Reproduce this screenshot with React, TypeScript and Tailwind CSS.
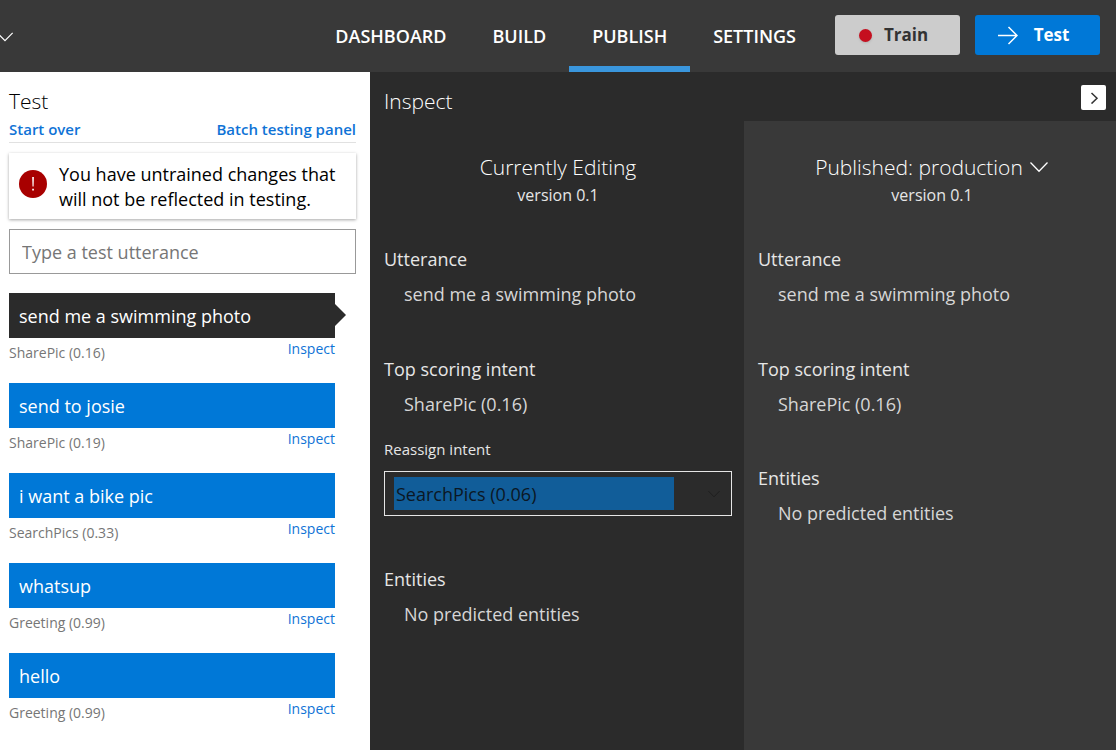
import React from "react";

type Utterance = { text: string; intent: string; score: string };

const utterances: Utterance[] = [
  { text: "send me a swimming photo", intent: "SharePic", score: "0.16" },
  { text: "send to josie", intent: "SharePic", score: "0.19" },
  { text: "i want a bike pic", intent: "SearchPics", score: "0.33" },
  { text: "whatsup", intent: "Greeting", score: "0.99" },
  { text: "hello", intent: "Greeting", score: "0.99" },
];

const tabs = ["DASHBOARD", "BUILD", "PUBLISH", "SETTINGS"];

function Chevron({ className }: { className: string }) {
  return (
    <svg className={className} viewBox="0 0 20 12" fill="none" stroke="currentColor" strokeWidth="1.3" aria-hidden="true">
      <path d="M1.5 1.5 10 10.2 18.5 1.5" />
    </svg>
  );
}

function Header() {
  return (
    <header className="flex h-[72px] shrink-0 items-center bg-[#393939] pr-4 text-white">
      <button type="button" aria-label="Select app" className="-ml-1 mt-0.5">
        <Chevron className="h-3 w-[18px]" />
      </button>
      <nav className="ml-auto mr-4 flex h-full">
        {tabs.map((tab) => (
          <a
            key={tab}
            href={`#${tab.toLowerCase()}`}
            className={
              tab === "PUBLISH"
                ? "flex items-center border-y-[6px] border-t-transparent border-b-[#3a96dd] px-[23px] text-lg font-semibold"
                : "flex items-center border-y-[6px] border-transparent px-[23px] text-lg font-semibold"
            }
          >
            {tab}
          </a>
        ))}
      </nav>
      <div className="flex gap-[15px] pb-0.5">
        <button type="button" className="flex h-10 w-[125px] items-center justify-center gap-3 rounded-[3px] bg-[#cccccc] pr-2 text-[17px] font-bold text-[#333333]">
          <span className="size-[13px] rounded-full bg-[#c50f1f] shadow-sm" />
          Train
        </button>
        <button type="button" className="flex h-10 w-[125px] items-center justify-center gap-4 rounded-[3px] bg-[#0078d7] pr-2 text-[17px] font-bold">
          <svg className="h-5 w-5" viewBox="0 0 20 20" fill="none" stroke="currentColor" strokeWidth="1.5" aria-hidden="true">
            <path d="M0 10.500H19M10.500 2 19 10.500l-8.500 8.500" />
          </svg>
          Test
        </button>
      </div>
    </header>
  );
}

function TestPanel() {
  return (
    <aside className="w-[370px] shrink-0 bg-white pr-[14px] pl-[9px] text-black">
      <h2 className="pt-[15px] text-[21px] leading-7 font-light">Test</h2>
      <div className="flex justify-between border-b border-[#e1e1e1] pt-1 pb-[3px] text-[15px] leading-5 font-semibold text-[#0f73d6]">
        <a href="#start-over">Start over</a>
        <a href="#batch">Batch testing panel</a>
      </div>
      <div role="alert" className="mt-2.5 flex h-[66px] items-center gap-3 bg-white pl-2.5 shadow-[0_1px_3px_rgba(0,0,0,0.35)]">
        <svg className="mb-1 size-7 shrink-0" viewBox="0 0 28 28" aria-hidden="true">
          <circle cx="14" cy="14" r="14" fill="#a80000" />
          <path d="M13.2 7h1.700l-.3 9.500h-1.100zM13.200 18.700H14.900v1.900h-1.700z" fill="#fff" />
        </svg>
        <p className="pt-0.5 text-lg leading-[25px]">
          You have untrained changes that
          <br />
          will not be reflected in testing.
        </p>
      </div>
      <input
        type="text"
        aria-label="Test utterance"
        placeholder="Type a test utterance"
        className="mt-2.5 h-[45px] w-full border border-[#999999] bg-white px-3 text-lg placeholder:text-[#767676]"
      />
      <ul className="mt-[19px] mr-[21px]">
        {utterances.map((item, index) => (
          <li key={item.text} className="h-[90px]">
            <div
              className={
                index === 0
                  ? "relative flex h-[45px] items-center bg-[#2b2b2b] px-2.5 text-lg text-white"
                  : "flex h-[45px] items-center bg-[#0078d7] px-2.5 text-lg text-white"
              }
            >
              {item.text}
              {index === 0 && (
                <svg className="absolute top-[11px] left-full h-[22px] w-[11px]" viewBox="0 0 11 22" aria-hidden="true">
                  <path d="M0 0 11 11 0 22z" fill="#2b2b2b" />
                </svg>
              )}
            </div>
            <div className="flex justify-between text-sm leading-5">
              <span className="pt-[5px] text-[#767676]">
                {item.intent} ({item.score})
              </span>
              <a href="#inspect" className="pt-px text-[#0f73d6]">
                Inspect
              </a>
            </div>
          </li>
        ))}
      </ul>
    </aside>
  );
}

function Field({ label, value }: { label: string; value: string }) {
  return (
    <div className="text-lg leading-[26px]">
      <h4>{label}</h4>
      <p className="mt-[9px] pl-5 text-[#d6d6d6]">{value}</p>
    </div>
  );
}

function InspectPanel() {
  return (
    <main className="flex min-w-0 flex-1 flex-col bg-[#2b2b2b] text-[#e6e6e6]">
      <div className="flex h-[49px] items-center justify-between pt-0.5 pr-2.5 pl-3.5">
        <h2 className="pt-1.5 text-[21px] leading-7 font-light text-white">Inspect</h2>
        <button type="button" aria-label="Collapse inspect panel" className="flex size-[25px] items-center justify-center rounded-[2px] bg-white text-[#333333]">
          <svg className="size-3" viewBox="0 0 12 12" fill="none" stroke="currentColor" strokeWidth="1.5" aria-hidden="true">
            <path d="M3.500 1 9 6.300 3.500 11.600" />
          </svg>
        </button>
      </div>
      <div className="flex flex-1">
        <section className="flex-1 pt-8 pr-3 pl-3.5">
          <div className="text-center">
            <h3 className="text-[21px] leading-7 font-light text-white">Currently Editing</h3>
            <p className="text-base leading-7">version 0.1</p>
          </div>
          <div className="mt-[37px]">
            <Field label="Utterance" value="send me a swimming photo" />
          </div>
          <div className="mt-[49px]">
            <Field label="Top scoring intent" value="SharePic (0.16)" />
          </div>
          <label htmlFor="reassign" className="mt-5 block text-[15px] leading-6">
            Reassign intent
          </label>
          <div className="mt-[10px] flex h-[45px] items-center justify-between border border-[#e6e6e6] px-[9px]">
            <select id="reassign" className="h-[33px] w-[280px] appearance-none bg-[#115d99] px-0.5 text-lg text-[#0b1724]">
              <option>SearchPics (0.06)</option>
            </select>
            <Chevron className="h-2 w-4 text-[#1c1c1c]" />
          </div>
          <div className="mt-[50px]">
            <Field label="Entities" value="No predicted entities" />
          </div>
        </section>
        <section className="flex-1 bg-[#393939] pt-8 pr-2.5 pl-3.5">
          <div className="text-center">
            <button type="button" className="inline-flex items-center gap-1.5 text-[21px] leading-7 font-light text-white">
              Published: production
              <Chevron className="h-3 w-5" />
            </button>
            <p className="text-base leading-7">version 0.1</p>
          </div>
          <div className="mt-[37px]">
            <Field label="Utterance" value="send me a swimming photo" />
          </div>
          <div className="mt-[49px]">
            <Field label="Top scoring intent" value="SharePic (0.16)" />
          </div>
          <div className="mt-12">
            <Field label="Entities" value="No predicted entities" />
          </div>
        </section>
      </div>
    </main>
  );
}

export default function App() {
  return (
    <div className="flex min-h-screen flex-col font-['Open_Sans','Noto_Sans',sans-serif]">
      <Header />
      <div className="flex flex-1">
        <TestPanel />
        <InspectPanel />
      </div>
    </div>
  );
}
